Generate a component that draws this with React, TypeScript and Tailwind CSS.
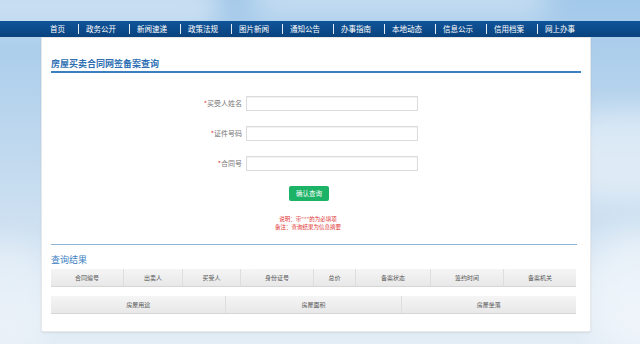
import React from "react";

const navItems = ["首页","政务公开","新闻速递","政策法规","图片新闻","通知公告","办事指南","本地动态","信息公示","信用档案","网上办事"];
const head1 = [
  { t: "合同编号", w: 72 },
  { t: "出卖人", w: 59 },
  { t: "买受人", w: 58 },
  { t: "身份证号", w: 73 },
  { t: "总价", w: 42 },
  { t: "备案状态", w: 75 },
  { t: "签约时间", w: 73 },
  { t: "备案机关", w: 73 },
];
const head2 = ["房屋用途","房屋面积","房屋坐落"];

const font = { fontFamily: '"Noto Sans CJK SC", "Noto Sans", sans-serif' };

function Row({ label }: { label: string }) {
  return (
    <div className="flex items-center h-[15px]">
      <div className="w-[195px] text-right text-[7px] leading-[15px] text-[#777] pr-[4px]">
        <span className="text-[#e0312f]">*</span>{label}
      </div>
      <div className="w-[172px] h-[15px] border border-[#dcdcdc] bg-white shadow-[inset_0_1px_1px_rgba(0,0,0,0.06)]" />
    </div>
  );
}

export default function App() {
  return (
    <div className="relative w-[640px] h-[344px] overflow-hidden bg-gradient-to-b from-[#a3c9ea] via-[#c4dbef] to-[#e3edf6]" style={font}>
      <div className="absolute left-[-40px] top-[-20px] w-[260px] h-[50px] rounded-full bg-white/40 blur-[12px]" />
      <div className="absolute left-[250px] top-[-25px] w-[300px] h-[45px] rounded-full bg-white/35 blur-[14px]" />
      <div className="absolute left-[560px] top-[110px] w-[140px] h-[90px] rounded-full bg-white/45 blur-[14px]" />
      <div className="absolute left-[580px] top-[230px] w-[120px] h-[120px] rounded-full bg-white/50 blur-[16px]" />
      <div className="absolute left-[-30px] top-[240px] w-[80px] h-[110px] rounded-full bg-white/35 blur-[14px]" />

      <div className="relative">
        <div className="h-[21px]" />
        <div className="h-[16px] bg-gradient-to-b from-[#0f5499] to-[#0a437f] flex items-center pl-[50px]">
          {navItems.map((t, i) => (
            <div key={t} className={`flex items-center h-[10px] text-white text-[7.5px] leading-[10px] pr-[13px] ${i > 0 ? "border-l border-white/90 pl-[7px]" : ""}`}>
              {t}
            </div>
          ))}
        </div>

        <div className="ml-[41px] w-[550px] h-[295px] bg-white border border-[#e8e8e8] rounded-b-[2px] shadow-[0_1px_2px_rgba(0,0,0,0.08)] pl-[9px] pr-[9px] flex flex-col">
          <div className="mt-[18px] text-[9px] leading-[15px] font-bold text-[#2e6fb4]">房屋买卖合同网签备案查询</div>
          <div className="h-[2px] bg-[#3d80c2]" />

          <div className="mt-[23px] flex flex-col gap-[15px]">
            <Row label="买受人姓名" />
            <Row label="证件号码" />
            <Row label="合同号" />
          </div>

          <div className="mt-[15px] ml-[238px] w-[40px] h-[15px] rounded-[2px] bg-[#1cb366] text-white text-[6.5px] leading-[15px] text-center">确认查询</div>

          <div className="mt-[14px] w-[514px] text-center text-[5.5px] leading-[8px] text-[#e0312f]">
            <div>说明：带"*"的为必填项</div>
            <div>备注：查询结果为信息摘要</div>
          </div>

          <div className="mt-[13px] w-[526px] h-[1px] bg-[#8db6d6]" />

          <div className="mt-[9px] text-[9px] leading-[12px] text-[#3d80c2]">查询结果</div>

          <div className="mt-[3px] flex w-[525px] h-[18px] bg-gradient-to-b from-[#f5f5f5] to-[#e8e8e8] border-b border-[#d6d6d6]">
            {head1.map((c, i) => (
              <div key={c.t} style={{ width: c.w }} className={`text-center text-[6px] leading-[18px] text-[#555] ${i > 0 ? "border-l border-[#dedede]" : ""}`}>{c.t}</div>
            ))}
          </div>

          <div className="mt-[9px] flex w-[525px] h-[18px] bg-gradient-to-b from-[#f5f5f5] to-[#e8e8e8] border-b border-[#d6d6d6]">
            {head2.map((t, i) => (
              <div key={t} className={`flex-1 text-center text-[6px] leading-[18px] text-[#555] ${i > 0 ? "border-l border-[#dedede]" : ""}`}>{t}</div>
            ))}
          </div>
        </div>
      </div>
    </div>
  );
}
